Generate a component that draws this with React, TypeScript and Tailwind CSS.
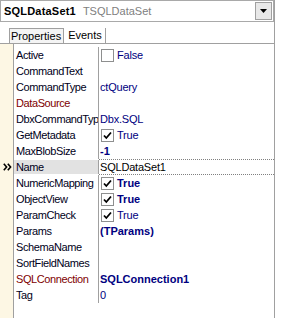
import React from "react"

type Row = {
  name: string
  value?: string
  check?: boolean
  bold?: boolean
  ref?: boolean
  plain?: boolean
  selected?: boolean
}

const rows: Row[] = [
  { name: "Active", value: "False", check: false },
  { name: "CommandText" },
  { name: "CommandType", value: "ctQuery" },
  { name: "DataSource", ref: true },
  { name: "DbxCommandType", value: "Dbx.SQL" },
  { name: "GetMetadata", value: "True", check: true },
  { name: "MaxBlobSize", value: "-1", bold: true },
  { name: "Name", value: "SQLDataSet1", plain: true, selected: true },
  { name: "NumericMapping", value: "True", check: true, bold: true },
  { name: "ObjectView", value: "True", check: true, bold: true },
  { name: "ParamCheck", value: "True", check: true },
  { name: "Params", value: "(TParams)", bold: true },
  { name: "SchemaName" },
  { name: "SortFieldNames" },
  { name: "SQLConnection", value: "SQLConnection1", bold: true, ref: true },
  { name: "Tag", value: "0" },
]

function CheckBox({ on }: { on: boolean }) {
  return (
    <span className="w-[13px] h-[13px] border border-[#8e8f8f] bg-white flex items-center justify-center mr-[3px] ml-[1px] shrink-0">
      {on && (
        <svg width="9" height="9" viewBox="0 0 9 9">
          <path d="M1 4.5 L3.3 7 L8 1.5" fill="none" stroke="#000" strokeWidth="1.8" />
        </svg>
      )}
    </span>
  )
}

export default function App() {
  return (
    <div
      className="w-[281px] h-[318px] bg-white overflow-hidden text-[11px] leading-none relative"
      style={{ fontFamily: '"Liberation Sans", Arial, sans-serif' }}
    >
      <div className="w-[275px] h-[318px] border-r border-[#a0a0a0] flex flex-col">
        {/* combo */}
        <div className="h-[22px] w-[274px] border border-[#a9a9a9] flex items-center pl-[3px]">
          <span className="font-bold text-black tracking-[0.2px]">SQLDataSet1</span>
          <span className="ml-[7px] text-[#808080]">TSQLDataSet</span>
          <div className="ml-auto mr-[1px] w-[17px] h-[18px] bg-[#e8e8e8] border border-[#a0a0a0] flex items-center justify-center">
            <svg width="7" height="4" viewBox="0 0 7 4">
              <path d="M0 0 H7 L3.5 4 Z" fill="#000" />
            </svg>
          </div>
        </div>

        {/* tabs */}
        <div className="h-[22px] flex items-end pl-[9px] border-b border-[#a0a0a0]">
          <div className="h-[15px] border border-b-0 border-[#a0a0a0] bg-[#f4f4f4] pl-[1px] pr-[2px] flex items-center text-black">
            Properties
          </div>
          <div className="h-[15px] pl-[4px] pr-[3px] flex items-center text-black border-r border-[#a0a0a0]">
            Events
          </div>
        </div>

        {/* grid */}
        <div className="flex flex-1">
          <div className="w-[14px] bg-[#fdf7e4] border-r border-[#a0a0a0] pt-[3px] flex flex-col">
            {rows.map((r) => (
              <div key={r.name} className="h-[16px] flex items-center pl-[3px]">
                {r.selected && (
                  <svg width="9" height="8" viewBox="0 0 9 8">
                    <path d="M0.8 0.8 L3.6 4 L0.8 7.2 M4.8 0.8 L7.6 4 L4.8 7.2" fill="none" stroke="#000" strokeWidth="1.6" />
                  </svg>
                )}
              </div>
            ))}
          </div>
          <div className="flex-1 pt-[3px] flex flex-col">
            {rows.map((r) => (
              <div key={r.name} className="h-[16px] flex">
                <div
                  className={`w-[85px] border-r border-[#a0a0a0] flex items-center overflow-hidden whitespace-nowrap pl-[2px] tracking-[-0.4px] ${
                    r.selected ? "bg-[#e2e2e2] my-[1px]" : ""
                  } ${r.ref ? "text-[#800000]" : "text-[#000020]"}`}
                >
                  {r.name}
                </div>
                <div
                  className={`flex-1 flex items-center pl-[1px] whitespace-nowrap ${
                    r.selected ? "border-y border-dotted border-[#808080]" : ""
                  } ${r.plain ? "text-black" : "text-[#000080]"} ${r.bold ? "font-bold" : "tracking-[-0.2px]"}`}
                >
                  {r.check !== undefined && <CheckBox on={r.check} />}
                  {r.value}
                </div>
              </div>
            ))}
          </div>
        </div>
      </div>
    </div>
  )
}
